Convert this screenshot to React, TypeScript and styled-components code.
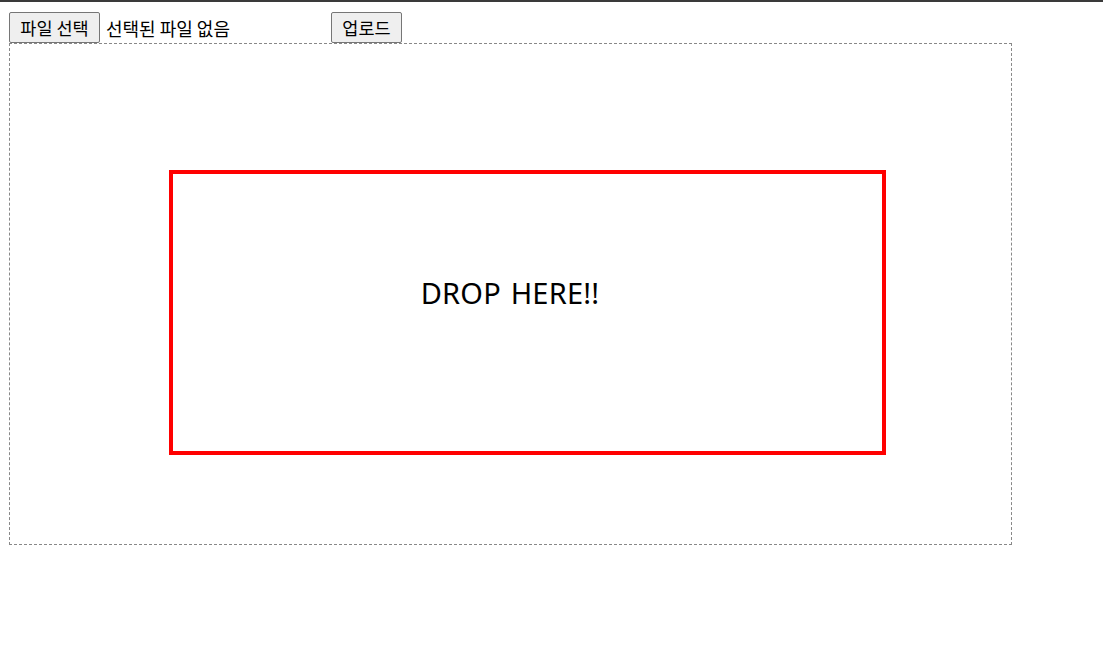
import React from "react";
import styled, { createGlobalStyle } from "styled-components";

const GlobalStyle = createGlobalStyle`
  html, body {
    margin: 0;
    padding: 0;
    background: #ffffff;
  }
  body {
    font-family: "Noto Sans CJK KR", "Noto Sans", sans-serif;
    color: #000000;
  }
`;

const TopLine = styled.div({
  height: "2px",
  background: "#3a3a3a",
});

const Page = styled.div({
  padding: "10px 9px 0 9px",
});

const Toolbar = styled.div({
  display: "flex",
  alignItems: "center",
  height: "31px",
});

const FileField = styled.div({
  display: "flex",
  alignItems: "center",
  width: "318px",
  gap: "6px",
});

const Button = styled.button<{ $width: number }>`
  width: ${(p) => p.$width}px;
  height: 31px;
  padding: 0;
  border: 1px solid #767676;
  border-radius: 2px;
  background: #efefef;
  color: #000000;
  font-family: "Noto Sans CJK KR", sans-serif;
  font-size: 17.5px;
  line-height: 1;
  flex-shrink: 0;
`;

const FileStatus = styled.span({
  fontSize: "18px",
  whiteSpace: "nowrap",
  lineHeight: 1,
});

const UploadWrap = styled.div({
  marginLeft: "4px",
});

const DropArea = styled.div({
  boxSizing: "border-box",
  width: "1003px",
  height: "502px",
  border: "1px dashed #888888",
  padding: "126px 125px 89px 159px",
});

const DropTarget = styled.div({
  boxSizing: "border-box",
  height: "100%",
  border: "4px solid #ff0000",
  paddingTop: "99px",
  paddingRight: "35px",
  textAlign: "center",
});

const DropLabel = styled.span({
  fontFamily: '"Noto Sans", "Open Sans", sans-serif',
  fontSize: "29px",
  letterSpacing: "0.2px",
  wordSpacing: "2px",
});

export default function App() {
  return (
    <>
      <GlobalStyle />
      <TopLine />
      <Page>
        <Toolbar>
          <FileField>
            <Button $width={91}>파일 선택</Button>
            <FileStatus>선택된 파일 없음</FileStatus>
          </FileField>
          <UploadWrap>
            <Button $width={71}>업로드</Button>
          </UploadWrap>
        </Toolbar>
        <DropArea>
          <DropTarget>
            <DropLabel>DROP HERE!!</DropLabel>
          </DropTarget>
        </DropArea>
      </Page>
    </>
  );
}
